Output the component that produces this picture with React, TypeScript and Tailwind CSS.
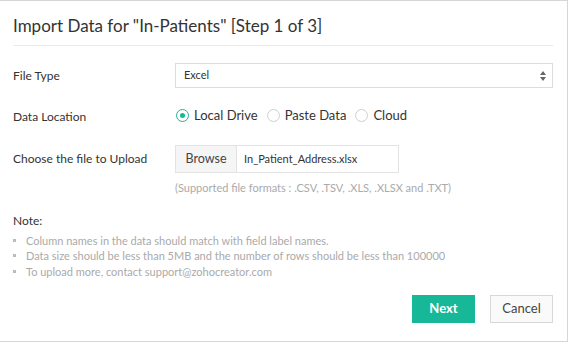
const notes = [
  'Column names in the data should match with field label names.',
  'Data size should be less than 5MB and the number of rows should be less than 100000',
  'To upload more, contact support@zohocreator.com',
];

const Radio = ({ label, checked }: { label: string; checked?: boolean }) => (
  <label className="flex items-center gap-[5px]">
    <span
      className={`flex h-[13px] w-[13px] items-center justify-center rounded-full border ${
        checked ? 'border-[#17b897]' : 'border-[#cfcfcf]'
      }`}
    >
      {checked && <span className="h-[5px] w-[5px] rounded-full bg-[#17b897]" />}
    </span>
    <span className="text-[13px] text-[#333]">{label}</span>
  </label>
);

const App = () => {
  return (
    <main
      className="h-[342px] w-[568px] overflow-hidden bg-white"
      style={{ fontFamily: 'Lato, "Open Sans", sans-serif' }}
    >
      <div className="h-full w-full border-y border-r border-[#d6d6d6] pl-[13px] pr-[14px]">
        {/* header */}
        <div className="border-b border-[#ebebeb] pt-[15px] pb-[10px]">
          <h1 className="text-[17px] leading-[19px] text-[#333]">
            Import Data for "In-Patients" [Step 1 of 3]
          </h1>
        </div>

        {/* form */}
        <div className="flex items-center pt-[17px]">
          <span className="w-[162px] text-[12px] text-[#333]">File Type</span>
          <div className="flex h-[25px] flex-1 items-center justify-between border border-[#dcdcdc] pl-[8px] pr-[6px]">
            <span className="text-[11px] text-[#333]">Excel</span>
            <span className="flex flex-col items-center gap-[2px]">
              <svg width="6" height="4" viewBox="0 0 6 4">
                <path d="M0 4L3 0L6 4Z" fill="#666" />
              </svg>
              <svg width="6" height="4" viewBox="0 0 6 4">
                <path d="M0 0L3 4L6 0Z" fill="#666" />
              </svg>
            </span>
          </div>
        </div>

        <div className="flex items-center pt-[17px]">
          <span className="w-[162px] pt-[3px] text-[12px] text-[#333]">Data Location</span>
          <div className="flex items-center gap-[9px] pl-[1px]">
            <Radio label="Local Drive" checked />
            <Radio label="Paste Data" />
            <Radio label="Cloud" />
          </div>
        </div>

        <div className="flex items-center pt-[19px]">
          <span className="w-[162px] text-[12px] text-[#333]">Choose the file to Upload</span>
          <div className="flex h-[28px] w-[224px] border border-[#e3e3e3]">
            <span className="flex w-[61px] items-center justify-center border-r border-[#e3e3e3] bg-[#f5f5f5] text-[12.5px] text-[#444]">
              Browse
            </span>
            <span className="flex items-center pl-[7px] text-[11px] text-[#333]">
              In_Patient_Address.xlsx
            </span>
          </div>
        </div>
        <p className="pt-[7px] pl-[162px] text-[11px] text-[#aaa]">
          (Supported file formats : .CSV, .TSV, .XLS, .XLSX and .TXT)
        </p>

        {/* notes */}
        <p className="pt-[15px] text-[12px] text-[#333]">Note:</p>
        <ul className="pt-[3px]">
          {notes.map((n) => (
            <li key={n} className="flex items-center gap-[10px] text-[11px] leading-[15.5px] text-[#aaa]">
              <span className="h-[3px] w-[3px] bg-[#bbb]" />
              {n}
            </li>
          ))}
        </ul>

        {/* actions */}
        <div className="flex justify-end gap-[15px] pt-[16px]">
          <button className="h-[28px] w-[63px] bg-[#17b897] text-[13px] font-bold text-white">Next</button>
          <button className="h-[28px] w-[63px] border border-[#d8d8d8] bg-[#fafafa] text-[13px] text-[#444]">
            Cancel
          </button>
        </div>
      </div>
    </main>
  );
};

export default App;
